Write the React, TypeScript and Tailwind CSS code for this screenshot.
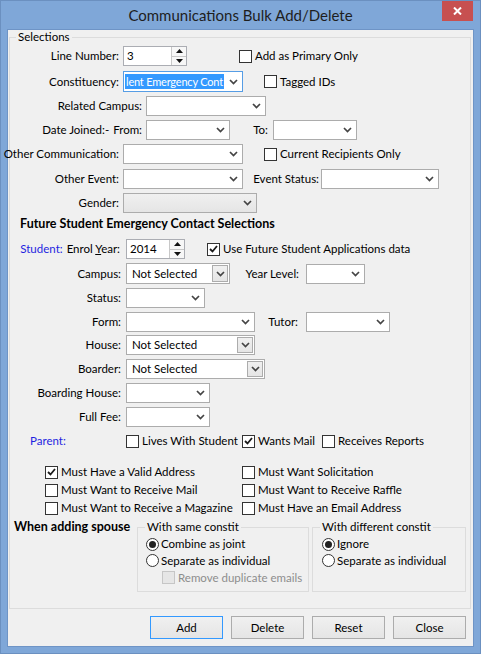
import React from 'react';

type ComboProps = {
    className?: string;
    value?: string;
    selected?: boolean;
    disabled?: boolean;
    focus?: boolean;
    button?: boolean;
};

function Chevron() {
    return (
        <svg width="9" height="6" viewBox="0 0 9 6">
            <path d="M1 1 L4.5 4.5 L8 1" fill="none" stroke="#444" strokeWidth="1.7" />
        </svg>
    );
}

function Combo({ className = '', value, selected, disabled, focus, button }: ComboProps) {
    return (
        <div
            className={`flex shrink-0 items-stretch border ${focus ? 'border-[#569de5]' : 'border-[#acacac]'} ${
                disabled ? 'bg-linear-to-b from-[#f0f0f0] to-[#e5e5e5]' : 'bg-white'
            } ${className}`}
        >
            <div className="flex flex-1 items-center overflow-hidden whitespace-nowrap">
                {selected ? (
                    <span className="ml-[1px] bg-[#3399ff] px-[1px] text-[11px] leading-[15px] tracking-[-0.2px] text-white">
                        {value}
                    </span>
                ) : value ? (
                    <span className="pl-[5px]">{value}</span>
                ) : null}
            </div>
            {button ? (
                <div className="m-[1px] flex w-[16px] items-center justify-center border border-[#acacac] bg-linear-to-b from-[#f0f0f0] to-[#e5e5e5]">
                    <Chevron />
                </div>
            ) : (
                <div className="flex w-[17px] items-center justify-center">
                    <Chevron />
                </div>
            )}
        </div>
    );
}

function Spin({ className = '', value }: { className?: string; value: string }) {
    return (
        <div className={`flex h-[20px] shrink-0 border border-[#abadb3] bg-white ${className}`}>
            <div className="flex flex-1 items-center pl-[3px]">{value}</div>
            <div className="flex w-[15px] flex-col border-l border-[#c8c8c8]">
                <div className="flex flex-1 items-center justify-center border-b border-[#c8c8c8] bg-[#f7f7f7]">
                    <svg width="7" height="4" viewBox="0 0 7 4">
                        <path d="M0 4 L3.5 0 L7 4 Z" fill="#111" />
                    </svg>
                </div>
                <div className="flex flex-1 items-center justify-center bg-[#f7f7f7]">
                    <svg width="7" height="4" viewBox="0 0 7 4">
                        <path d="M0 0 L3.5 4 L7 0 Z" fill="#111" />
                    </svg>
                </div>
            </div>
        </div>
    );
}

function Check({ checked, disabled }: { checked?: boolean; disabled?: boolean }) {
    return (
        <span
            className={`flex h-[13px] w-[13px] shrink-0 items-center justify-center border ${
                disabled ? 'border-[#c6c6c6] bg-[#e6e6e6]' : 'border-[#333] bg-white'
            }`}
        >
            {checked && (
                <svg width="9" height="8" viewBox="0 0 9 8">
                    <path d="M1 4 L3.5 6.5 L8 1" fill="none" stroke="#1a1a1a" strokeWidth="1.8" />
                </svg>
            )}
        </span>
    );
}

function CheckLabel({ label, checked, disabled }: { label: string; checked?: boolean; disabled?: boolean }) {
    return (
        <span className="flex items-center gap-[3px] whitespace-nowrap">
            <Check checked={checked} disabled={disabled} />
            <span className={disabled ? 'text-[#8d8d8d]' : ''}>{label}</span>
        </span>
    );
}

function Radio({ label, checked }: { label: string; checked?: boolean }) {
    return (
        <span className="flex items-center gap-[2px] whitespace-nowrap">
            <span className="flex h-[13px] w-[13px] shrink-0 items-center justify-center rounded-full border border-[#333] bg-white">
                {checked && <span className="h-[7px] w-[7px] rounded-full bg-[#222]" />}
            </span>
            <span>{label}</span>
        </span>
    );
}

function Btn({ label, primary }: { label: string; primary?: boolean }) {
    return (
        <div
            className={`flex h-[23px] w-[73px] items-center justify-center border bg-linear-to-b from-[#f0f0f0] to-[#e5e5e5] ${
                primary ? 'border-[#3399ff]' : 'border-[#acacac]'
            }`}
        >
            {label}
        </div>
    );
}

export default function App() {
    return (
        <div className="relative h-[654px] w-[481px] border border-[#6b90c0] bg-[#7fa7d8] font-['Lato',sans-serif] text-[11.5px] text-black">
            {/* Title bar */}
            <div className="flex h-[28px] items-center justify-center text-[15px] text-[#1e1e1e]">
                Communications Bulk Add/Delete
            </div>
            <div className="absolute right-[7px] top-[0px] flex h-[20px] w-[31px] items-center justify-center bg-[#c75050]">
                <svg width="9" height="8" viewBox="0 0 9 8">
                    <path d="M1 0.5 L8 7.5 M8 0.5 L1 7.5" stroke="#fff" strokeWidth="2" />
                </svg>
            </div>

            {/* Client area */}
            <div className="ml-[6px] flex h-[618px] w-[467px] flex-col border border-[#6e94c6] bg-[#f0f0f0]">
                <fieldset className="ml-[1px] mr-[2px] border border-[#dcdcdc]">
                    <legend className="ml-[6px] px-[2px] leading-[14px]">Selections</legend>

                    <div className="flex flex-col whitespace-nowrap pb-[16px]">
                        {/* Line Number */}
                        <div className="mt-[2px] flex h-[20px] items-center">
                            <div className="flex w-[113px] justify-end pr-[4px]">Line Number:</div>
                            <Spin className="w-[64px]" value="3" />
                            <div className="ml-[52px]">
                                <CheckLabel label="Add as Primary Only" />
                            </div>
                        </div>

                        {/* Constituency */}
                        <div className="mt-[5px] flex h-[21px] items-center">
                            <div className="flex w-[113px] justify-end pr-[4px]">Constituency:</div>
                            <Combo className="h-[21px] w-[120px]" value="lent Emergency Cont" selected focus />
                            <div className="ml-[21px]">
                                <CheckLabel label="Tagged IDs" />
                            </div>
                        </div>

                        {/* Related Campus */}
                        <div className="mt-[4px] flex h-[20px] items-center">
                            <div className="flex w-[136px] justify-end pr-[4px]">Related Campus:</div>
                            <Combo className="h-[20px] w-[120px]" />
                        </div>

                        {/* Date Joined */}
                        <div className="mt-[4px] flex h-[20px] items-center">
                            <div className="flex w-[136px] justify-end gap-[4px] pr-[4px]">
                                <span>Date Joined:-</span>
                                <span>From:</span>
                            </div>
                            <Combo className="h-[20px] w-[84px]" />
                            <div className="flex w-[43px] justify-end pr-[5px]">To:</div>
                            <Combo className="h-[20px] w-[84px]" />
                        </div>

                        {/* Other Communication */}
                        <div className="mt-[4px] flex h-[20px] items-center">
                            <div className="flex w-[113px] justify-end pr-[4px]">Other Communication:</div>
                            <Combo className="h-[20px] w-[120px]" />
                            <div className="ml-[21px]">
                                <CheckLabel label="Current Recipients Only" />
                            </div>
                        </div>

                        {/* Other Event */}
                        <div className="mt-[5px] flex h-[20px] items-center">
                            <div className="flex w-[113px] justify-end pr-[4px]">Other Event:</div>
                            <Combo className="h-[20px] w-[120px]" />
                            <div className="flex w-[78px] justify-end pr-[2px]">Event Status:</div>
                            <Combo className="h-[20px] w-[118px]" />
                        </div>

                        {/* Gender */}
                        <div className="mt-[4px] flex h-[20px] items-center">
                            <div className="flex w-[113px] justify-end pr-[4px]">Gender:</div>
                            <Combo className="h-[20px] w-[134px]" disabled />
                        </div>

                        <div className="mt-[3px] h-[16px] pl-[10px] text-[12.5px] font-bold leading-[16px]">
                            Future Student Emergency Contact Selections
                        </div>

                        {/* Student */}
                        <div className="mt-[7px] flex h-[20px] items-center">
                            <div className="flex w-[116px] justify-end gap-[4px] pr-[6px]">
                                <span className="text-[#1f1fe0]">Student:</span>
                                <span>
                                    Enrol <span className="underline">Y</span>ear:
                                </span>
                            </div>
                            <Spin className="w-[59px]" value="2014" />
                            <div className="ml-[22px]">
                                <CheckLabel label="Use Future Student Applications data" checked />
                            </div>
                        </div>

                        {/* Campus */}
                        <div className="mt-[4px] flex h-[21px] items-center">
                            <div className="flex w-[116px] justify-end pr-[5px]">Campus:</div>
                            <Combo className="h-[21px] w-[104px]" value="Not Selected" button />
                            <div className="flex w-[76px] justify-end pr-[7px]">Year Level:</div>
                            <Combo className="h-[20px] w-[59px]" />
                        </div>

                        {/* Status */}
                        <div className="mt-[4px] flex h-[20px] items-center">
                            <div className="flex w-[116px] justify-end pr-[5px]">Status:</div>
                            <Combo className="h-[20px] w-[79px]" />
                        </div>

                        {/* Form */}
                        <div className="mt-[4px] flex h-[20px] items-center">
                            <div className="flex w-[116px] justify-end pr-[5px]">Form:</div>
                            <Combo className="h-[20px] w-[129px]" />
                            <div className="flex w-[51px] justify-end pr-[8px]">Tutor:</div>
                            <Combo className="h-[20px] w-[84px]" />
                        </div>

                        {/* House */}
                        <div className="mt-[3px] flex h-[20px] items-center">
                            <div className="flex w-[116px] justify-end pr-[5px]">House:</div>
                            <Combo className="h-[20px] w-[129px]" value="Not Selected" button />
                        </div>

                        {/* Boarder */}
                        <div className="mt-[4px] flex h-[20px] items-center">
                            <div className="flex w-[116px] justify-end pr-[5px]">Boarder:</div>
                            <Combo className="h-[20px] w-[139px]" value="Not Selected" button />
                        </div>

                        {/* Boarding House */}
                        <div className="mt-[4px] flex h-[20px] items-center">
                            <div className="flex w-[116px] justify-end pr-[5px]">Boarding House:</div>
                            <Combo className="h-[20px] w-[84px]" />
                        </div>

                        {/* Full Fee */}
                        <div className="mt-[4px] flex h-[20px] items-center">
                            <div className="flex w-[116px] justify-end pr-[5px]">Full Fee:</div>
                            <Combo className="h-[20px] w-[84px]" />
                        </div>

                        {/* Parent */}
                        <div className="mt-[7px] flex h-[14px] items-center">
                            <div className="w-[116px] pl-[20px] text-[#1f1fe0]">Parent:</div>
                            <div className="w-[116px]">
                                <CheckLabel label="Lives With Student" />
                            </div>
                            <div className="w-[80px]">
                                <CheckLabel label="Wants Mail" checked />
                            </div>
                            <CheckLabel label="Receives Reports" />
                        </div>

                        {/* Must have options */}
                        <div className="mt-[15px] grid grid-cols-[197px_1fr] pl-[35px]">
                            <div className="flex h-[18px] items-center">
                                <CheckLabel label="Must Have a Valid Address" checked />
                            </div>
                            <div className="flex h-[18px] items-center">
                                <CheckLabel label="Must Want Solicitation" />
                            </div>
                            <div className="flex h-[18px] items-center">
                                <CheckLabel label="Must Want to Receive Mail" />
                            </div>
                            <div className="flex h-[18px] items-center">
                                <CheckLabel label="Must Want to Receive Raffle" />
                            </div>
                            <div className="flex h-[18px] items-center">
                                <CheckLabel label="Must Want to Receive a Magazine" />
                            </div>
                            <div className="flex h-[18px] items-center">
                                <CheckLabel label="Must Have an Email Address" />
                            </div>
                        </div>

                        {/* Spouse */}
                        <div className="mt-[3px] flex items-stretch">
                            <div className="ml-[4px] w-[123px] text-[12.5px] font-bold leading-[14px]">When adding spouse</div>
                            <fieldset className="w-[172px] border border-[#dcdcdc] pb-[5px]">
                                <legend className="ml-[7px] px-[2px] leading-[14px]">With same constit</legend>
                                <div className="mt-[2px] flex h-[16px] items-center pl-[8px]">
                                    <Radio label="Combine as joint" checked />
                                </div>
                                <div className="flex h-[17px] items-center pl-[8px]">
                                    <Radio label="Separate as individual" />
                                </div>
                                <div className="flex h-[17px] items-center pl-[24px]">
                                    <CheckLabel label="Remove duplicate emails" disabled />
                                </div>
                            </fieldset>
                            <fieldset className="ml-[3px] w-[154px] border border-[#dcdcdc]">
                                <legend className="ml-[7px] px-[2px] leading-[14px]">With different constit</legend>
                                <div className="mt-[2px] flex h-[16px] items-center pl-[9px]">
                                    <Radio label="Ignore" checked />
                                </div>
                                <div className="flex h-[17px] items-center pl-[9px]">
                                    <Radio label="Separate as individual" />
                                </div>
                            </fieldset>
                        </div>
                    </div>
                </fieldset>

                {/* Buttons */}
                <div className="mt-[7px] flex justify-end gap-[8px] pr-[7px]">
                    <Btn label="Add" primary />
                    <Btn label="Delete" />
                    <Btn label="Reset" />
                    <Btn label="Close" />
                </div>
            </div>
        </div>
    );
}
